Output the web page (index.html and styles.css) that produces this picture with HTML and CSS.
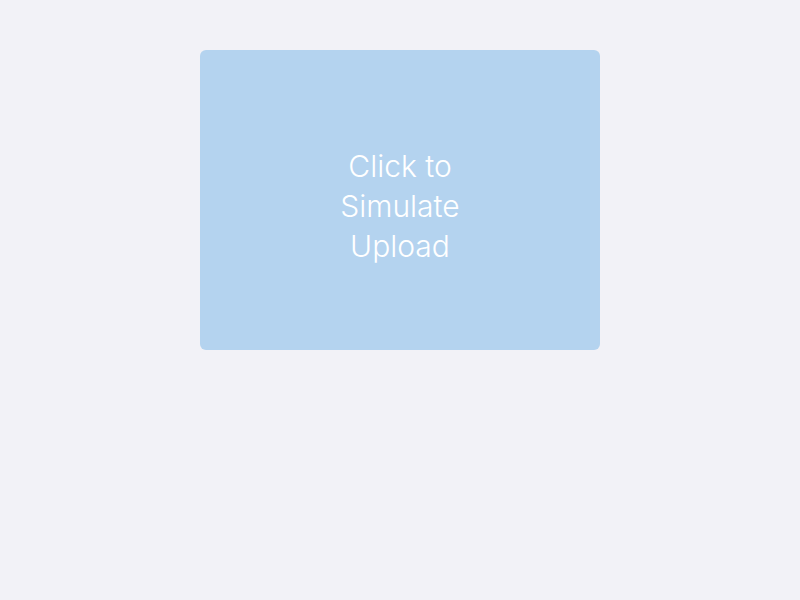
FILE: index.html
```html
<!DOCTYPE html>
<html>
<head>
<meta charset="utf-8">
<link rel="stylesheet" href="styles.css">
</head>
<body>
<div class="page">
  <div class="upload">
    <span class="label">Click to Simulate Upload</span>
  </div>
</div>
</body>
</html>
```
FILE: styles.css
```css
html, body {
  margin: 0;
  padding: 0;
  background: #f2f2f7;
  height: 100%;
}
.page {
  display: flex;
  justify-content: center;
  padding-top: 50px;
}
.upload {
  box-sizing: border-box;
  width: 400px;
  height: 300px;
  padding-top: 12px;
  background: #b4d3ef;
  border-radius: 6px;
  display: flex;
  align-items: center;
  justify-content: center;
}
.label {
  font-family: Inter, "Liberation Sans", sans-serif;
  font-size: 30px;
  line-height: 40px;
  color: #ffffff;
  text-align: center;
  max-width: 130px;
  font-weight: 300;
}
```
